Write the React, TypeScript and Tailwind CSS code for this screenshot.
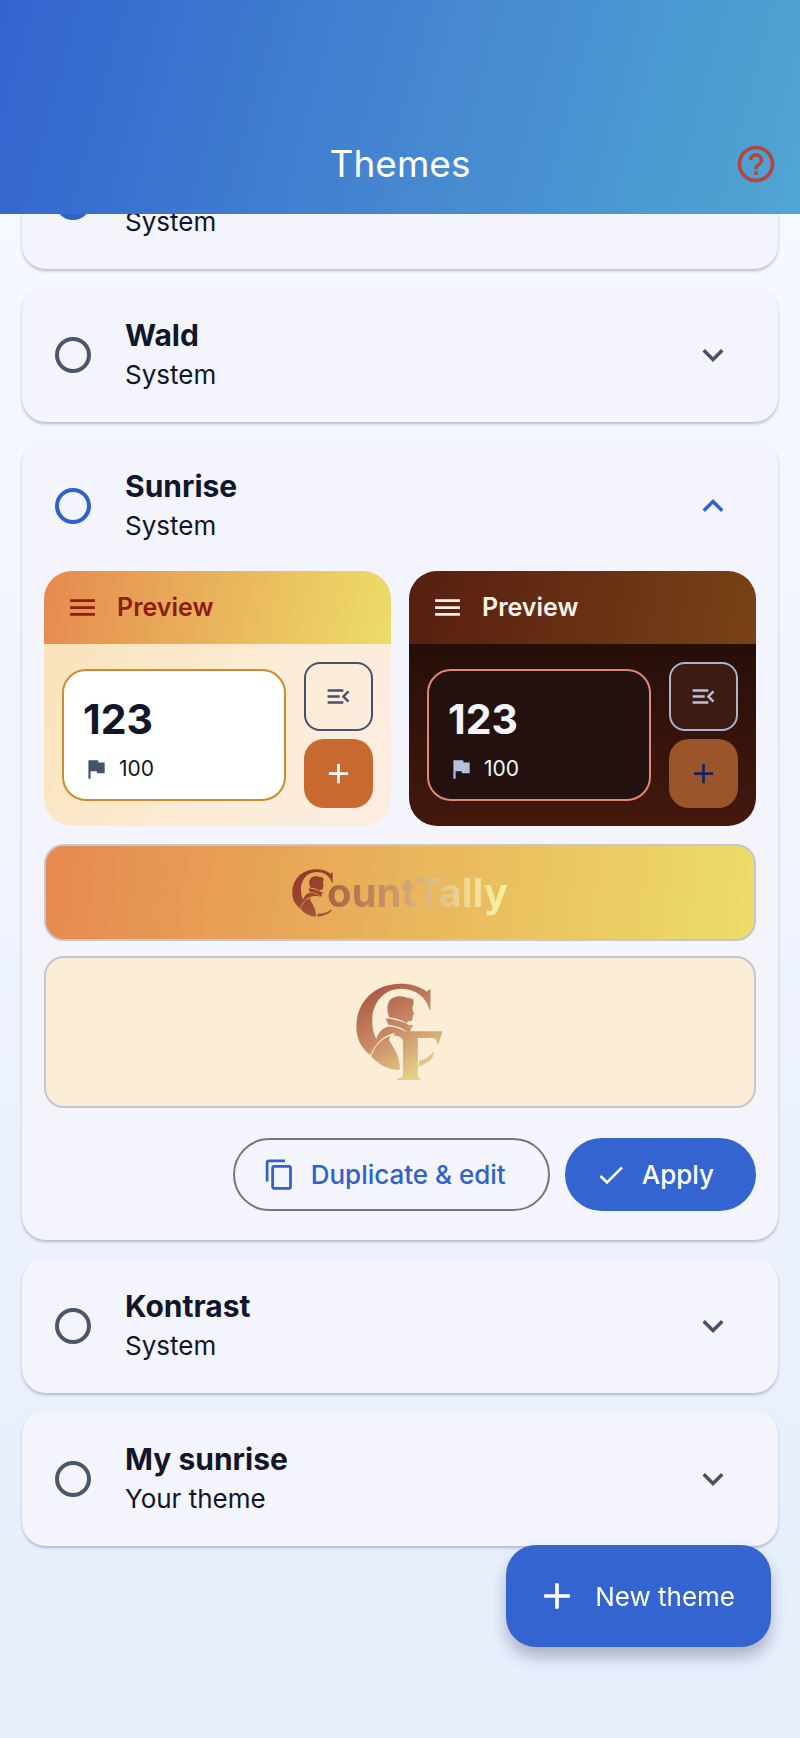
import { useId, useState } from 'react';
import {
  MdAdd,
  MdCheck,
  MdContentCopy,
  MdExpandLess,
  MdExpandMore,
  MdFlag,
  MdHelpOutline,
  MdMenu,
  MdMenuOpen,
} from 'react-icons/md';

type Theme = {
  id: string;
  name: string;
  owner: string;
};

const themes: Theme[] = [
  { id: 'standard', name: 'Standard', owner: 'System' },
  { id: 'wald', name: 'Wald', owner: 'System' },
  { id: 'sunrise', name: 'Sunrise', owner: 'System' },
  { id: 'kontrast', name: 'Kontrast', owner: 'System' },
  { id: 'my-sunrise', name: 'My sunrise', owner: 'Your theme' },
];

// Class sets for the two preview variants
const previewStyles = {
  light: {
    header: 'bg-[linear-gradient(102deg,#e6894f,#e9b45b_50%,#ecdd69)] text-[#8c1d10]',
    body: 'bg-[linear-gradient(118deg,#fae3bb,#fcecd8_60%,#fcede2)]',
    card: 'bg-white border-[#cf8a2e] text-[#11162a]',
    flag: 'text-[#45526c]',
    outline: 'border-[#45526c] text-[#45526c]',
    filled: 'bg-[#c86a30] text-white',
  },
  dark: {
    header: 'bg-[linear-gradient(102deg,#561e10,#7a4216)] text-[#fdf3ea]',
    body: 'bg-[linear-gradient(180deg,#260f09,#43180e)]',
    card: 'bg-[#23120f] border-[#e08873] text-[#f4f5fc]',
    flag: 'text-[#b4c2e2]',
    outline: 'bg-[#3b1b12] border-[#aeb2cf] text-[#b4c2e2]',
    filled: 'bg-[#9c552a] text-[#1a2557]',
  },
};

function LogoMark({ monogram, className }: { monogram?: boolean; className: string }) {
  const id = useId();
  return (
    <svg viewBox={monogram ? '48 70 266 296' : '48 70 226 266'} className={className} aria-hidden="true">
      <defs>
        <linearGradient id={id} x1="80" y1="90" x2="230" y2="350" gradientUnits="userSpaceOnUse">
          <stop offset="0" stopColor={monogram ? '#ab5740' : '#94382a'} />
          <stop offset="0.5" stopColor={monogram ? '#c88a66' : '#9a4630'} />
          <stop offset="1" stopColor={monogram ? '#e6d287' : '#a85c3e'} />
        </linearGradient>
      </defs>
      <g fill={`url(#${id})`}>
        {/* bow of the C */}
        <path d="M273 87 L273 150 L270 150 C260 112 228 87 184 87 C126 88 97 136 97 184 C97 208 102 227 110 240 C99 254 92 270 90 287 C62 264 49 236 49 202 C49 126 106 72 182 72 C214 72 240 80 262 96 Z" />
        {/* head */}
        <path d="M144 158 C139 130 152 112 176 110 C190 109 198 113 207 116 L212 113 L213 119 L219 117 C223 123 223 129 221 136 C219 141 219 146 219 151 L224 164 L219 168 L219 177 C219 184 213 186 206 185 L201 191 C184 180 166 175 148 174 Z" />
        {/* collar, shoulder and coat */}
        <path d="M138 177 C164 179 190 186 207 196 L214 211 L208 226 C196 208 172 199 146 197 Z" />
        <path d="M209 196 L221 198 L212 210 Z" />
        <path d="M109 239 C116 218 128 206 146 201 C170 202 192 210 205 223 L186 221 C146 214 110 244 92 287 L88 284 C92 266 100 252 109 239 Z" />
        <path d="M94 291 C104 262 124 238 154 229 C147 235 147 240 150 246 C168 275 183 300 180 333 C146 332 115 316 94 291 Z" />
        {monogram ? (
          <>
            <path d="M206 216 L310 216 L297 254 L293 254 C292 241 288 236 276 236 L235 236 L235 345 C235 356 238 358 243 359 L243 363 L172 363 L172 359 C184 358 190 354 190 344 L190 250 C190 236 182 229 162 229 L166 221 Z" />
            <path d="M238 306 C256 302 272 292 285 275 L279 296 C268 309 254 317 238 322 Z" />
          </>
        ) : (
          <path d="M188 335 C220 333 250 320 270 298 L262 296 C242 310 218 318 188 318 Z" />
        )}
      </g>
    </svg>
  );
}

function ThemePreview({ variant }: { variant: 'light' | 'dark' }) {
  const s = previewStyles[variant];
  return (
    <div className="flex-1 overflow-hidden rounded-[28px]">
      <div className={`flex h-[73px] items-center gap-[18px] px-[22px] ${s.header}`}>
        <MdMenu className="size-[33px]" />
        <span className="text-[25px] font-semibold">Preview</span>
      </div>
      <div className={`flex items-center gap-[18px] p-[18px] ${s.body}`}>
        <div className={`flex h-[132px] flex-1 flex-col justify-end gap-1.5 rounded-3xl border-2 px-[19px] pb-3 ${s.card}`}>
          <span className="text-[41px] leading-[52px] font-bold">123</span>
          <span className="flex items-center gap-2.5 text-[21px] leading-9">
            <MdFlag className={`size-[26px] ${s.flag}`} />
            100
          </span>
        </div>
        <div className="flex flex-col gap-2">
          <button
            type="button"
            aria-label="Menu"
            className={`flex size-[69px] items-center justify-center rounded-2xl border-2 ${s.outline}`}
          >
            <MdMenuOpen className="size-[29px]" />
          </button>
          <button
            type="button"
            aria-label="Add"
            className={`flex size-[69px] items-center justify-center rounded-[20px] ${s.filled}`}
          >
            <MdAdd className="size-[33px]" />
          </button>
        </div>
      </div>
    </div>
  );
}

function ThemeDetails() {
  return (
    <div className="px-[22px] pb-[29px]">
      <div className="flex gap-[18px]">
        <ThemePreview variant="light" />
        <ThemePreview variant="dark" />
      </div>

      {/* Word mark on the app bar gradient */}
      <div className="mt-[18px] flex h-[97px] items-center justify-center rounded-[20px] border-2 border-[#c8c5cd] bg-[linear-gradient(98deg,#e6894f,#e9b45b_50%,#ecdd69)]">
        <LogoMark className="h-12 w-[41px]" />
        <span className="-ml-1.5 bg-[linear-gradient(90deg,#aa6240,#c28c64_30%,#d9b880_55%,#ecd795_75%,#fdf3a4)] bg-clip-text text-[40px] leading-[52px] font-bold text-transparent">
          ountTally
        </span>
      </div>

      {/* Monogram on the page background */}
      <div className="mt-[15px] flex h-[152px] items-center justify-center rounded-[20px] border-2 border-[#c8c5cd] bg-[#fcedd6]">
        <LogoMark monogram className="h-[98px] w-[88px]" />
      </div>

      <div className="mt-[30px] flex justify-end gap-[15px] text-[26px] font-medium">
        <button
          type="button"
          className="flex h-[73px] items-center gap-[15px] rounded-full border-2 border-[#76777d] pr-[42px] pl-7 text-[#3062cb]"
        >
          <MdContentCopy className="size-[33px]" />
          Duplicate &amp; edit
        </button>
        <button
          type="button"
          className="flex h-[73px] items-center gap-[15px] rounded-full bg-[#3364cf] pr-[42px] pl-[30px] text-white"
        >
          <MdCheck className="size-8" />
          Apply
        </button>
      </div>
    </div>
  );
}

type ThemeCardProps = {
  theme: Theme;
  selected: boolean;
  open: boolean;
  onSelect: () => void;
  onToggle: () => void;
};

function ThemeCard({ theme, selected, open, onSelect, onToggle }: ThemeCardProps) {
  return (
    <li className="rounded-3xl bg-[#f3f4fc] shadow-[0_2px_3px_rgba(40,40,60,0.28)]">
      <div className={`flex items-center pr-11 pl-[33px] ${open ? 'h-[131px]' : 'h-[135px]'}`}>
        <label htmlFor={theme.id} className="flex flex-1 items-center gap-[34px]">
          <input
            id={theme.id}
            type="radio"
            name="theme"
            checked={selected}
            onChange={onSelect}
            className={`size-9 appearance-none rounded-full border-4 checked:border-[#3062cb] checked:bg-[#3062cb] ${
              open ? 'border-[#3062cb]' : 'border-[#4a566c]'
            }`}
          />
          <span className="flex flex-col text-[#11162a]">
            <span className="text-[30px] leading-10 font-bold">{theme.name}</span>
            <span className="text-[26px] leading-10">{theme.owner}</span>
          </span>
        </label>
        <button
          type="button"
          aria-expanded={open}
          aria-label={`Details of ${theme.name}`}
          onClick={onToggle}
          className={open ? 'text-[#3062cb]' : 'text-[#4a5266]'}
        >
          {open ? <MdExpandLess className="size-[42px]" /> : <MdExpandMore className="size-[42px]" />}
        </button>
      </div>
      {open && <ThemeDetails />}
    </li>
  );
}

export default function App() {
  const [selectedId, setSelectedId] = useState<string>('standard');
  const [openId, setOpenId] = useState<string | null>('sunrise');

  return (
    <div className="min-h-screen bg-[linear-gradient(180deg,#f8faff,#ecf2fd_65%,#e7effd)] font-[Inter,'Liberation_Sans',sans-serif]">
      {/* App bar, includes the status bar area */}
      <header className="sticky top-0 z-10 grid h-[214px] grid-cols-[1fr_auto_1fr] items-end bg-[linear-gradient(105deg,#3264cf,#4585d0_50%,#4fa6d3)] px-[22px] pb-7">
        <h1 className="col-start-2 text-[37px] leading-[44px] font-normal text-white">Themes</h1>
        <button type="button" aria-label="Help" className="justify-self-end text-[#b5453f]">
          <MdHelpOutline className="size-11" />
        </button>
      </header>

      {/* The list is scrolled a little, its first card lies partly under the app bar */}
      <main className="-mt-20 px-[22px] pb-48">
        <ul className="flex flex-col gap-[18px]">
          {themes.map((theme) => (
            <ThemeCard
              key={theme.id}
              theme={theme}
              selected={theme.id === selectedId}
              open={theme.id === openId}
              onSelect={() => setSelectedId(theme.id)}
              onToggle={() => setOpenId(theme.id === openId ? null : theme.id)}
            />
          ))}
        </ul>
      </main>

      <button
        type="button"
        className="fixed right-[29px] bottom-[91px] flex h-[102px] items-center gap-4 rounded-[30px] bg-[#3364cf] pr-9 pl-[29px] text-[26px] text-white shadow-[0_10px_16px_rgba(30,35,60,0.3)]"
      >
        <MdAdd className="size-11" />
        New theme
      </button>
    </div>
  );
}
